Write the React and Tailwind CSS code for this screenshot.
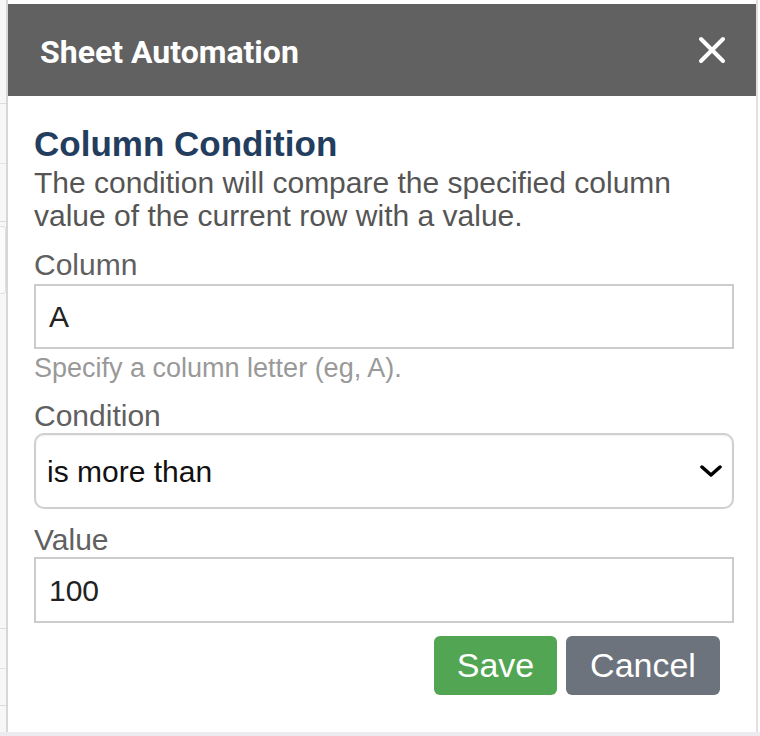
import React from "react";

const CloseIcon = ({ className }) => (
  <svg className={className} viewBox="0 0 28 28" fill="none" stroke="currentColor">
    <path strokeWidth={4} strokeLinecap="round" d="M3 3l22 22M25 3L3 25" />
  </svg>
);

const ChevronIcon = ({ className }) => (
  <svg className={className} viewBox="0 0 22 12" fill="none" stroke="currentColor">
    <path strokeWidth={3.5} strokeLinecap="round" strokeLinejoin="round" d="M2 2l9 8 9-8" />
  </svg>
);

export default function App() {
  return (
    <div
      className="w-[760px] h-[736px] flex flex-col bg-white overflow-hidden"
      style={{ fontFamily: '"Liberation Sans", Arial, sans-serif' }}
    >
      <div className="flex flex-1 min-h-0">
        {/* page behind the dialog */}
        <div className="w-[6px] bg-[#f7f7f7] flex flex-col">
          <div className="h-[104px] border-b border-[#dcdcdc]" />
          <div className="h-[60px] border-b border-[#e6e6e6]" />
          <div className="h-[58px] border-b border-[#dcdcdc]" />
          <div className="h-[68px] mt-[4px] border border-l-0 border-[#e0e0e0] rounded-r bg-[#fbfbfb]" />
          <div className="h-[335px] border-b border-[#dcdcdc]" />
          <div className="h-[40px] border-b border-[#e2e2e2]" />
          <div className="h-[37px] border-b border-[#dcdcdc]" />
        </div>
        <div className="w-[2px] bg-[#d7d7d7]" />

        {/* dialog */}
        <div className="w-[748px] flex flex-col pt-[4px] bg-white">
          <div className="h-[92px] bg-[#616161] flex items-center justify-between pl-[32px] pr-[30px]">
            <h2
              className="text-white text-[32px] font-bold pt-[4px]"
              style={{ fontFamily: "Roboto, sans-serif" }}
            >
              Sheet Automation
            </h2>
            <CloseIcon className="w-[28px] h-[28px] text-white" />
          </div>

          <div className="flex flex-col pl-[26px] pr-[22px] pt-[28px]">
            <h3 className="text-[35px] leading-[40px] font-bold text-[#233d5e]">
              Column Condition
            </h3>
            <p className="text-[30px] leading-[33px] text-[#555555] mt-[2px]">
              The condition will compare the specified column value of the current row with a value.
            </p>

            <label className="text-[30px] leading-[34px] text-[#606060] mt-[16px]">Column</label>
            <div className="mt-[2px] h-[65px] border-2 border-[#cccccc] flex items-center px-[13px] text-[30px] text-[#222222]">
              A
            </div>
            <p className="text-[27px] leading-[32px] text-[#999999] mt-[3px]">
              Specify a column letter (eg, A).
            </p>

            <label className="text-[30px] leading-[34px] text-[#606060] mt-[15px]">Condition</label>
            <div className="mt-0 h-[76px] border-2 border-[#cfcfcf] rounded-[10px] shadow-[inset_0_1px_2px_rgba(0,0,0,0.06)] flex items-center justify-between pl-[11px] pr-[10px] text-[30px] text-[#111111]">
              <span>is more than</span>
              <ChevronIcon className="w-[22px] h-[12px] text-black" />
            </div>

            <label className="text-[30px] leading-[34px] text-[#606060] mt-[14px]">Value</label>
            <div className="mt-0 h-[66px] border-2 border-[#cccccc] flex items-center px-[13px] text-[30px] text-[#222222]">
              100
            </div>

            <div className="flex justify-end gap-[9px] mt-[13px] pr-[14px]">
              <button className="w-[123px] h-[59px] rounded-[6px] bg-[#51a553] text-white text-[34px]">
                Save
              </button>
              <button className="w-[154px] h-[59px] rounded-[6px] bg-[#6c737c] text-white text-[34px]">
                Cancel
              </button>
            </div>
          </div>
        </div>

        <div className="w-[2px] bg-[#e1e1e5]" />
        <div className="w-[2px] bg-white" />
      </div>
      <div className="h-[4px] bg-[#ececf0]" />
    </div>
  );
}
